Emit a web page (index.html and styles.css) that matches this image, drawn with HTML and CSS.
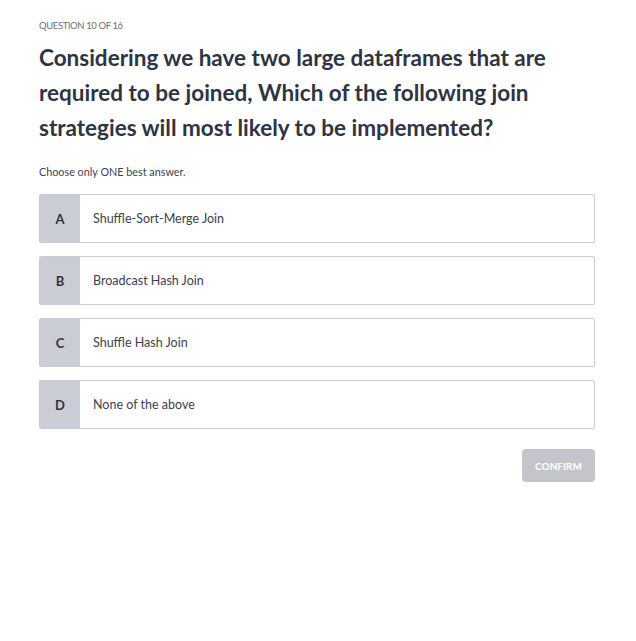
FILE: index.html
```html
<!DOCTYPE html>
<html>
<head>
<meta charset="utf-8">
<link rel="stylesheet" href="styles.css">
</head>
<body>
<div class="page">
  <div class="counter">QUESTION 10 OF 16</div>
  <h1 class="question">Considering we have two large dataframes that are required to be joined, Which of the following join strategies will most likely to be implemented?</h1>
  <div class="hint">Choose only ONE best answer.</div>
  <div class="options">
    <div class="option"><div class="letter">A</div><div class="label">Shuffle-Sort-Merge Join</div></div>
    <div class="option"><div class="letter">B</div><div class="label">Broadcast Hash Join</div></div>
    <div class="option"><div class="letter">C</div><div class="label">Shuffle Hash Join</div></div>
    <div class="option"><div class="letter">D</div><div class="label">None of the above</div></div>
  </div>
  <div class="actions"><button class="confirm">CONFIRM</button></div>
</div>
</body>
</html>
```
FILE: styles.css
```css
body {
  margin: 0;
  background: #fff;
  font-family: Lato, "Noto Sans", sans-serif;
  color: #2d3142;
}
.page {
  padding: 20px 41px 0 39px;
}
.counter {
  font-size: 9.5px;
  letter-spacing: -0.4px;
  color: #6b6f7a;
  line-height: 12px;
}
.question {
  margin: 8px 0 0;
  font-size: 22.5px;
  line-height: 35px;
  font-weight: 700;
  color: #2f3443;
}
.hint {
  margin-top: 20px;
  font-size: 10.8px;
  line-height: 14px;
  color: #3d4150;
}
.options {
  margin-top: 15px;
  display: flex;
  flex-direction: column;
  gap: 13px;
}
.option {
  display: flex;
  height: 49px;
  border: 1px solid #c8cad4;
  box-sizing: border-box;
  border-radius: 2px;
  overflow: hidden;
}
.letter {
  width: 40px;
  background: #cbcdd6;
  display: flex;
  align-items: center;
  justify-content: center;
  font-size: 13px;
  font-weight: 700;
  color: #2f3443;
}
.label {
  display: flex;
  align-items: center;
  padding-left: 13px;
  font-size: 12.5px;
  color: #3d4150;
}
.actions {
  display: flex;
  justify-content: flex-end;
  margin-top: 20px;
}
.confirm {
  width: 73px;
  height: 33px;
  border: none;
  border-radius: 4px;
  background: #c4c5cb;
  color: #fff;
  font-family: inherit;
  font-weight: 700;
  font-size: 10px;
  padding: 0;
}
```
